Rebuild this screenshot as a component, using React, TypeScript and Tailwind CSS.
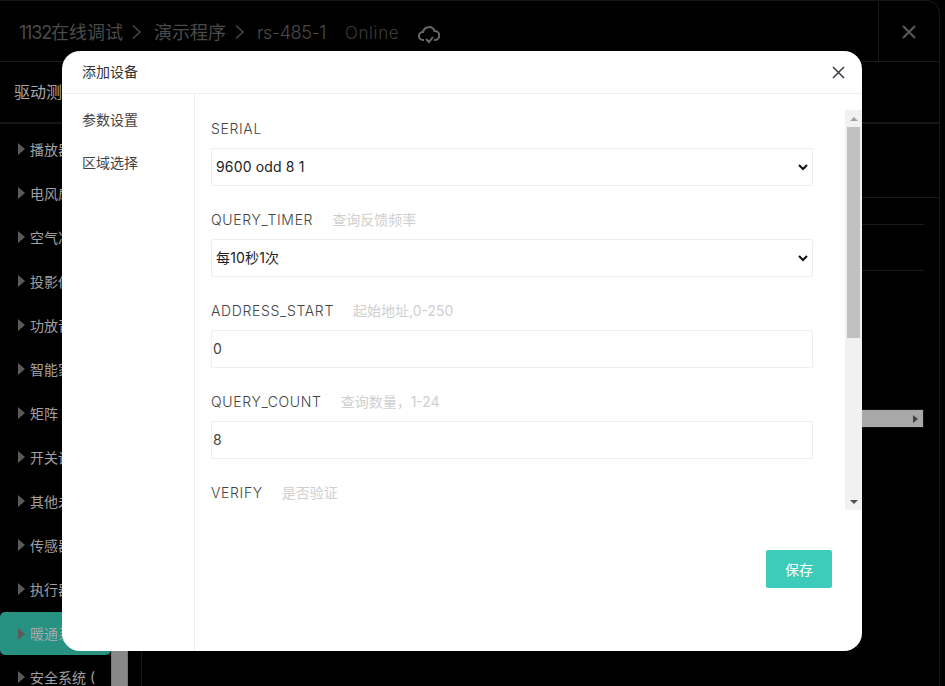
import React from "react";

const font = "font-['Inter','Noto_Sans_CJK_SC',sans-serif]";

const sideItems = ["播放器", "电风扇", "空气净", "投影仪", "功放音", "智能家", "矩阵", "开关设", "其他未", "传感器", "执行器"];

function Tri() {
  return <span className="mr-[5px] h-0 w-0 shrink-0 border-y-[6px] border-l-[7px] border-y-transparent border-l-[#5a5a5a]" />;
}

function Chevron() {
  return (
    <svg className="ml-[8px] mr-[12px]" width="11" height="18" viewBox="0 0 11 18" fill="none" stroke="#4b4b4b" strokeWidth="1.5">
      <path d="M2 2.5l7 6.5-7 6.5" />
    </svg>
  );
}

function Field({ label, hint, value, select }: { label: string; hint?: string; value: string; select?: boolean }) {
  return (
    <div className="mb-[15px]">
      <div className="flex h-[38px] items-center text-[14px] leading-none text-[#444]">
        <span className="font-light tracking-[0.65px]">{label}</span>
        {hint && <span className="ml-[19px] text-[14px] text-[#cfcfcf]">{hint}</span>}
      </div>
      <div className={`flex h-[38px] items-center justify-between rounded-[2px] border border-[#eeeeee] pb-[2px] pr-[3px] text-[14px] ${select ? "pl-[4px] text-[#222]" : "pl-[1px] text-[#444]"}`}>
        <span className="tracking-[0.15px]">{value}</span>
        {select && (
          <svg className="mt-[2px]" width="12" height="12" viewBox="0 0 12 12" fill="none">
            <path d="M2 4l4 4 4-4" stroke="#111" strokeWidth="2" />
          </svg>
        )}
      </div>
    </div>
  );
}

export default function App() {
  return (
    <div className={`relative h-[686px] w-[945px] overflow-hidden bg-black ${font}`}>
      {/* page behind the dialog */}
      <div className="h-[686px] w-[940px] rounded-tr-[14px] border-r border-t border-[#161616]">
        <div className="flex h-[61px] items-center border-b border-[#1a1a1a] pl-[19px] pt-[2px] text-[18px] text-[#4b4b4b]">
          <span className="tracking-[-1.2px]">1132</span>
          <span>在线调试</span>
          <Chevron />
          <span>演示程序</span>
          <Chevron />
          <span className="font-light tracking-[-0.4px]">rs-485-1</span>
          <span className="ml-[19px] mt-[3px] text-[17px] font-light tracking-[0.6px] text-[#3c3c3c]">Online</span>
          <svg className="ml-[19px] mt-[5px]" width="22" height="20" viewBox="0 0 22 20" fill="none" stroke="#6a6a6a" strokeWidth="2">
            <path d="M6 15H5a4 4 0 0 1 0-8 6 6 0 0 1 11.5-1A4.5 4.5 0 0 1 17 15h-1" />
            <path d="M8 14l3 3 4-5" />
          </svg>
          <div className="ml-auto -mt-[2px] flex h-[60px] w-[61px] items-center justify-center border-l border-[#1a1a1a]">
            <svg className="mt-[1px]" width="14" height="14" viewBox="0 0 14 14" stroke="#5e5e5e" strokeWidth="1.8">
              <path d="M1 1l12 12M13 1L1 13" />
            </svg>
          </div>
        </div>
        <div className="flex h-[62px] items-center border-b-2 border-[#161616] pl-[14px] text-[16px] text-[#a8a8a8]">驱动测试</div>
        <div className="flex h-[563px]">
          <div className="relative w-[142px] border-r border-[#161616]">
            <div className="pt-[4px]">
              {sideItems.map((s) => (
                <div key={s} className="flex h-[44px] items-center pb-[2px] pl-[18px] text-[14px] text-[#a0a0a0]">
                  <Tri />
                  {s}
                </div>
              ))}
              <div className="flex h-[43px] w-[111px] items-center rounded-[5px] bg-[#279182] pl-[18px] text-[14px] text-[#a8a8a8]">
                <Tri />
                暖通系统
              </div>
              <div className="flex h-[44px] w-[96px] items-center overflow-hidden whitespace-nowrap pl-[18px] text-[14px] text-[#a0a0a0]">
                <Tri />
                安全系统 (5
              </div>
            </div>
            <div className="absolute left-[111px] top-[527px] h-[40px] w-[17px] border-x border-[#777] bg-[#888]" />
          </div>
          <div className="min-w-0 flex-1">
            <div className="h-[74px] border-b border-[#1a1a1a]" />
            <div className="mr-[15px] h-[27px] border-b border-[#1a1a1a]" />
            <div className="mr-[15px] h-[46px] border-b border-[#1a1a1a]" />
            <div className="mr-[15px] mt-[138px] flex justify-end">
              <div className="flex h-[19px] w-[64px] items-center justify-end border border-[#141414] bg-[#a8a8a8] pr-[5px]">
                <span className="h-0 w-0 border-y-[4px] border-l-[5px] border-y-transparent border-l-[#444]" />
              </div>
            </div>
          </div>
        </div>
      </div>

      {/* dialog */}
      <div className="absolute left-[62px] top-[51px] flex h-[600px] w-[800px] flex-col overflow-hidden rounded-[18px] bg-white">
        <div className="flex h-[43px] shrink-0 items-center justify-between border-b border-[#eeeeee] pl-[20px] pr-[17px] text-[14px] text-[#333]">
          <span className="-mt-[2px]">添加设备</span>
          <svg width="13" height="13" viewBox="0 0 13 13" stroke="#3a3a44" strokeWidth="1.5">
            <path d="M1 1l11 11M12 1L1 12" />
          </svg>
        </div>
        <div className="flex min-h-0 flex-1">
          <div className="w-[133px] shrink-0 border-r border-[#eeeeee] pl-[20px] pt-[4px] text-[14px] text-[#444]">
            <div className="flex h-[43px] items-center">参数设置</div>
            <div className="flex h-[43px] items-center">区域选择</div>
          </div>
          <div className="min-w-0 flex-1">
            <div className="mt-[16px] flex h-[400px]">
              <div className="min-w-0 flex-1 overflow-hidden pl-[16px] pr-[32px]">
                <Field label="SERIAL" value="9600 odd 8 1" select />
                <Field label="QUERY_TIMER" hint="查询反馈频率" value="每10秒1次" select />
                <Field label="ADDRESS_START" hint="起始地址,0-250" value="0" />
                <Field label="QUERY_COUNT" hint="查询数量，1-24" value="8" />
                <Field label="VERIFY" hint="是否验证" value="" />
              </div>
              <div className="flex w-[17px] shrink-0 flex-col items-center bg-[#f1f1f1]">
                <div className="flex h-[17px] w-full items-center justify-center">
                  <span className="h-0 w-0 border-x-[4px] border-b-[4px] border-x-transparent border-b-[#a3a3a3]" />
                </div>
                <div className="h-[211px] w-[13px] bg-[#c1c1c1]" />
                <div className="flex-1" />
                <div className="flex h-[17px] w-full items-center justify-center">
                  <span className="h-0 w-0 border-x-[4px] border-t-[4px] border-x-transparent border-t-[#505050]" />
                </div>
              </div>
            </div>
            <div className="mt-[40px] flex justify-end pr-[30px]">
              <button className="h-[38px] w-[66px] rounded-[2px] bg-[#3dccb9] text-[14px] text-white">保存</button>
            </div>
          </div>
        </div>
      </div>
    </div>
  );
}
